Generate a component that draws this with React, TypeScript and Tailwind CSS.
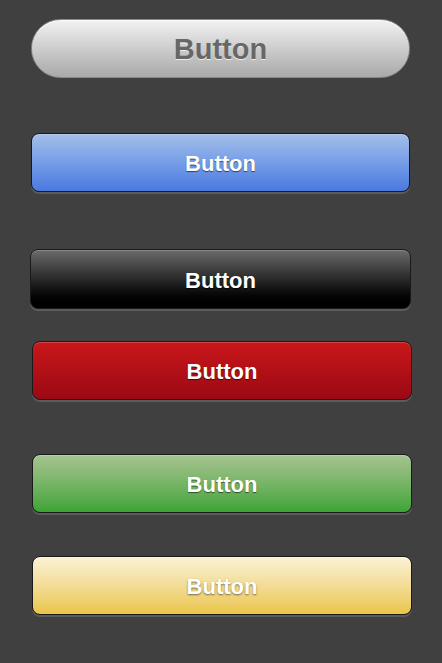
const font = { fontFamily: '"Liberation Sans", Arial, sans-serif' };

type Variant = {
  key: string;
  wrap: string;
  btn: string;
  text: string;
};

const variants: Variant[] = [
  {
    key: "blue",
    wrap: "mt-[55px] ml-[31px] w-[379px] h-[59px]",
    btn: "bg-gradient-to-b from-[#a3bfea] to-[#4b79e0]",
    text: "text-white [text-shadow:0_1px_1px_rgba(0,0,0,0.55)]",
  },
  {
    key: "black",
    wrap: "mt-[57px] ml-[30px] w-[381px] h-[60px]",
    btn: "bg-gradient-to-b from-[#6c6c6c] via-[#2a2a2a] to-[#000000]",
    text: "text-white [text-shadow:0_1px_1px_rgba(0,0,0,0.8)]",
  },
  {
    key: "red",
    wrap: "mt-[32px] ml-[32px] w-[380px] h-[59px]",
    btn: "bg-gradient-to-b from-[#c9171a] to-[#9b0914]",
    text: "text-white [text-shadow:0_1px_1px_rgba(0,0,0,0.6)]",
  },
  {
    key: "green",
    wrap: "mt-[54px] ml-[32px] w-[380px] h-[59px]",
    btn: "bg-gradient-to-b from-[#a6c391] to-[#3aa534]",
    text: "text-white [text-shadow:0_1px_1px_rgba(0,0,0,0.55)]",
  },
  {
    key: "yellow",
    wrap: "mt-[43px] ml-[32px] w-[380px] h-[59px]",
    btn: "bg-gradient-to-b from-[#fbf2d5] to-[#eac545]",
    text: "text-white [text-shadow:0_1px_2px_rgba(0,0,0,0.5)]",
  },
];

export default function App() {
  return (
    <div className="min-h-[663px] w-[442px] bg-[#404040] pt-[19px]" style={font}>
      <button className="ml-[31px] flex h-[59px] w-[379px] items-center justify-center rounded-full border border-[#8a8a8a] bg-gradient-to-b from-[#f2f2f2] to-[#a9a9a9] shadow-[inset_0_1px_0_rgba(255,255,255,0.8)]">
        <span className="pt-[2px] text-[29px] font-bold text-[#676767] [text-shadow:0_1px_0_rgba(255,255,255,0.7)]">
          Button
        </span>
      </button>

      {variants.map((v) => (
        <div key={v.key} className={`${v.wrap} rounded-[8px] shadow-[0_2px_0_rgba(255,255,255,0.14)]`}>
          <button
            className={`flex h-full w-full items-center justify-center rounded-[8px] border border-[#1a1a1a] ${v.btn} shadow-[inset_0_1px_0_rgba(255,255,255,0.2)]`}
          >
            <span className={`pt-[2px] text-[22px] font-bold ${v.text}`}>Button</span>
          </button>
        </div>
      ))}
    </div>
  );
}
